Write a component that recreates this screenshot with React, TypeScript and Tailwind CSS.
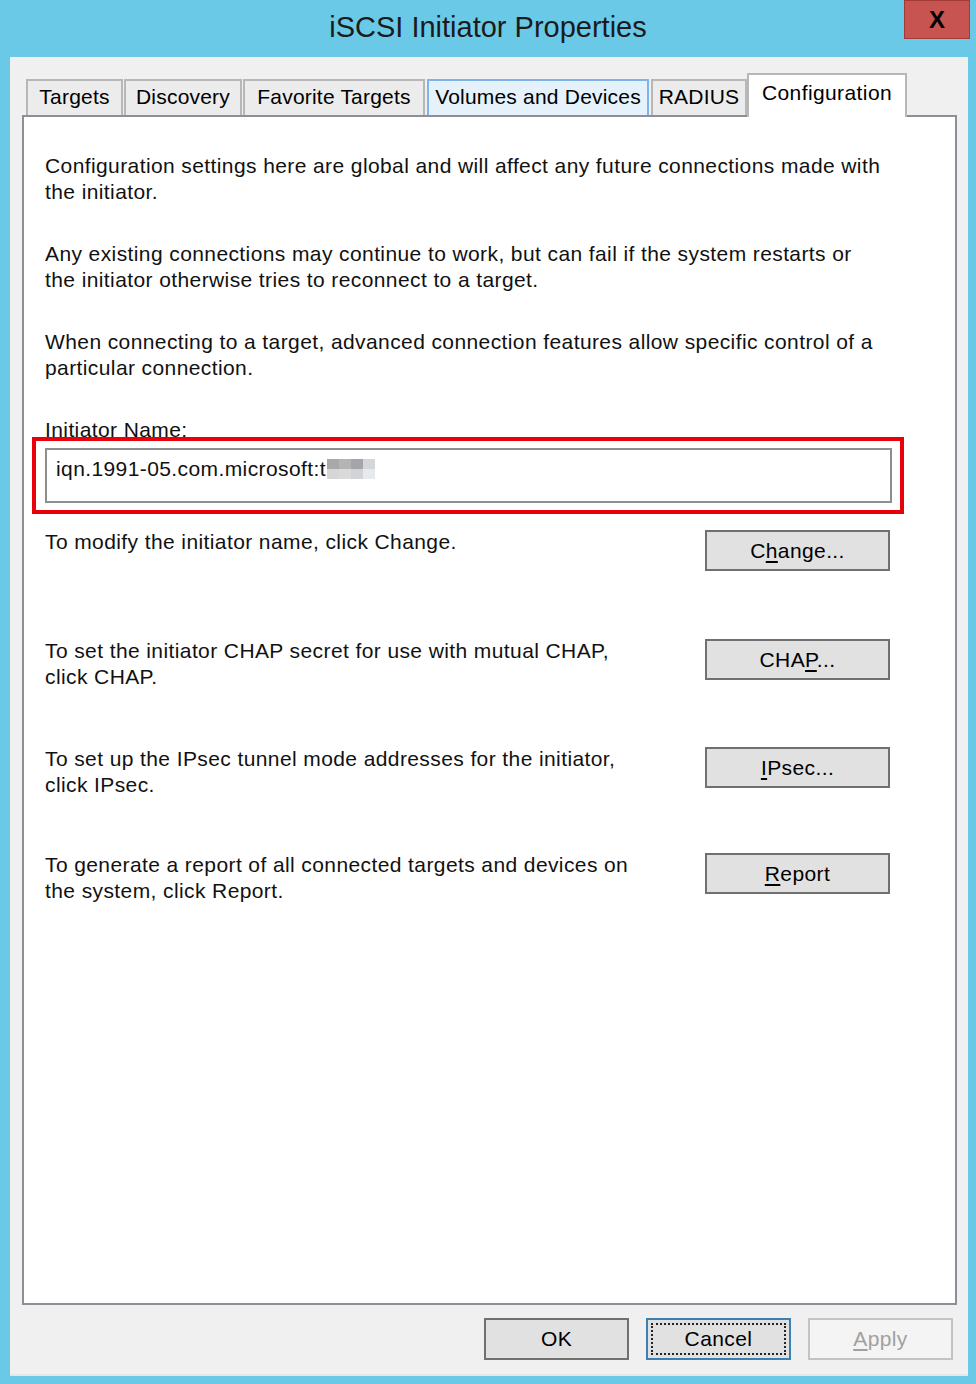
import React from "react";

const font = { fontFamily: '"Liberation Sans", Arial, sans-serif' };

function Btn({ children, className = "" }: { children: React.ReactNode; className?: string }) {
  return (
    <div
      className={
        "flex h-[41px] w-[185px] shrink-0 items-center justify-center border-2 border-[#707070] bg-[#e1e1e1] text-[#000] " +
        className
      }
    >
      {children}
    </div>
  );
}

function Row({ lines, button, top }: { lines: string[]; button: React.ReactNode; top: string }) {
  return (
    <div className={"flex items-start justify-between pr-[65px] " + top}>
      <p className="leading-[26px]">
        {lines.map((l, i) => (
          <span key={i} className="block">
            {l}
          </span>
        ))}
      </p>
      <Btn className="mt-px">{button}</Btn>
    </div>
  );
}

const tabs = [
  { label: "Targets", w: "w-[97px] mr-px" },
  { label: "Discovery", w: "w-[118px] mr-px" },
  { label: "Favorite Targets", w: "w-[182px] mr-[2px]" },
  { label: "Volumes and Devices", w: "w-[222px] mr-[2px]", hot: true },
  { label: "RADIUS", w: "w-[96px]" },
];

export default function App() {
  return (
    <div className="flex h-[1384px] w-[976px] flex-col bg-[#6bc9e8] text-[#000]" style={font}>
      {/* title bar */}
      <div className="relative flex h-[57px] shrink-0 items-center justify-center">
        <span className="pb-[2px] text-[29px] text-[#1b1b1b]">iSCSI Initiator Properties</span>
        <div className="absolute right-[6px] top-0 flex h-[39px] w-[66px] items-center justify-center border border-[#a23a36] bg-[#c75450]">
          <span className="text-[24px] font-bold leading-none text-black">X</span>
        </div>
      </div>

      {/* client area */}
      <div className="ml-[10px] mr-[8px] flex h-[1319px] flex-col border-b-2 border-[#e6e6e6] bg-[#f0f0f0] text-[21px] tracking-[0.4px]">
        {/* tabs */}
        <div className="ml-[16px] mt-[14px] flex h-[44px] items-end">
          {tabs.map((t) => (
            <div
              key={t.label}
              className={
                "flex h-[36px] items-center justify-center border-2 border-b-0 pb-[3px] tracking-[0.2px] " +
                t.w +
                (t.hot ? " border-[#7eb4ea] bg-[#e5f1fb]" : " border-[#b7b7b7] bg-[#ececec]")
              }
            >
              {t.label}
            </div>
          ))}
          <div className="relative z-10 -mb-[2px] flex h-[44px] w-[160px] items-start justify-center border-2 border-b-0 border-[#b7b7b7] bg-white pt-[2px]">
            Configuration
          </div>
        </div>

        {/* panel */}
        <div className="ml-[12px] mr-[11px] flex h-[1190px] flex-col border-2 border-[#8c8f96] bg-white pl-[21px] text-[#111]">
          <p className="mt-[36px] leading-[26px]">
            Configuration settings here are global and will affect any future connections made with
            <br />
            the initiator.
          </p>
          <p className="mt-[36px] leading-[26px]">
            Any existing connections may continue to work, but can fail if the system restarts or
            <br />
            the initiator otherwise tries to reconnect to a target.
          </p>
          <p className="mt-[36px] leading-[26px]">
            When connecting to a target, advanced connection features allow specific control of a
            <br />
            particular connection.
          </p>
          <p className="mt-[36px] leading-[26px]">Initiator Name:</p>

          <div className="relative mr-[63px] mt-[5px] flex h-[55px] items-start border-2 border-[#8e8e8e] bg-white pl-[9px] pt-[6px]">
            <span className="leading-[26px]">iqn.1991-05.com.microsoft:t</span>
            <span className="ml-[1px] mt-[3px] grid grid-cols-4">
              <span className="h-[10px] w-[12px] bg-[#a9a9ab]" />
              <span className="h-[10px] w-[12px] bg-[#b4b4b6]" />
              <span className="h-[10px] w-[12px] bg-[#a3a5ab]" />
              <span className="h-[10px] w-[12px] bg-[#d4d6da]" />
              <span className="h-[10px] w-[12px] bg-[#d6d6d6]" />
              <span className="h-[10px] w-[12px] bg-[#dadada]" />
              <span className="h-[10px] w-[12px] bg-[#d2d3d4]" />
              <span className="h-[10px] w-[12px] bg-[#e6eaee]" />
            </span>
            <div className="pointer-events-none absolute -bottom-[13px] -left-[15px] -right-[14px] -top-[13px] border-[4px] border-[#e8000b]" />
          </div>

          <Row
            top="mt-[26px]"
            lines={["To modify the initiator name, click Change."]}
            button={
              <span>
                C<span className="underline underline-offset-[3px]">h</span>ange...
              </span>
            }
          />
          <Row
            top="mt-[67px]"
            lines={["To set the initiator CHAP secret for use with mutual CHAP,", "click CHAP."]}
            button={
              <span>
                CHA<span className="underline underline-offset-[3px]">P</span>...
              </span>
            }
          />
          <Row
            top="mt-[56px]"
            lines={["To set up the IPsec tunnel mode addresses for the initiator,", "click IPsec."]}
            button={
              <span>
                <span className="underline underline-offset-[3px]">I</span>Psec...
              </span>
            }
          />
          <Row
            top="mt-[54px]"
            lines={["To generate a report of all connected targets and devices on", "the system, click Report."]}
            button={
              <span>
                <span className="underline underline-offset-[3px]">R</span>eport
              </span>
            }
          />
        </div>

        {/* bottom buttons */}
        <div className="mr-[15px] mt-[13px] flex justify-end gap-[17px]">
          <div className="flex h-[42px] w-[145px] items-center justify-center border-2 border-[#707070] bg-[#e1e1e1]">
            OK
          </div>
          <div className="flex h-[42px] w-[145px] items-center justify-center border-2 border-[#3c7fb1] bg-[#e1e1e1] p-[3px]">
            <div className="flex h-full w-full items-center justify-center border-2 border-dotted border-[#222]">
              Cancel
            </div>
          </div>
          <div className="flex h-[42px] w-[145px] items-center justify-center border-2 border-[#c3c3c3] bg-[#f4f4f4] text-[#a0a0a0]">
            <span>
              <span className="underline underline-offset-[3px]">A</span>pply
            </span>
          </div>
        </div>
      </div>
    </div>
  );
}
